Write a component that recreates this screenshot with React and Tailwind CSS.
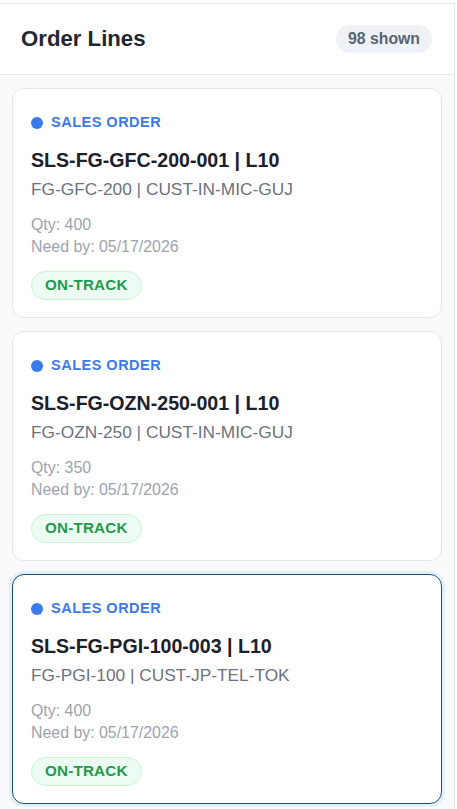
import React from "react";

const lines = [
  { id: "SLS-FG-GFC-200-001 | L10", sub: "FG-GFC-200 | CUST-IN-MIC-GUJ", qty: 400, need: "05/17/2026" },
  { id: "SLS-FG-OZN-250-001 | L10", sub: "FG-OZN-250 | CUST-IN-MIC-GUJ", qty: 350, need: "05/17/2026" },
  { id: "SLS-FG-PGI-100-003 | L10", sub: "FG-PGI-100 | CUST-JP-TEL-TOK", qty: 400, need: "05/17/2026", selected: true },
];

const LineCard = ({ line }) => (
  <div
    className={
      "rounded-[12px] bg-white px-[18px] pt-[24px] pb-[17px] border " +
      (line.selected
        ? "border-[#1d4f73] ring-[3px] ring-[#e3f0f9]"
        : "border-[#e3e7ec]")
    }
  >
    <div className="flex items-center gap-[8px] h-[20px]">
      <span className="w-[12px] h-[12px] rounded-full bg-[#3b7ae8]" />
      <span className="text-[14.5px] font-bold tracking-[0.5px] text-[#3b7ae8]">SALES ORDER</span>
    </div>
    <div className="mt-[13px] text-[19.6px] leading-[28px] font-bold text-[#1a202c]">{line.id}</div>
    <div className="mt-[3px] text-[17.3px] leading-[24px] text-[#6b7280]">{line.sub}</div>
    <div className="mt-[13px] text-[15.9px] leading-[22px] text-[#9ca3af]">
      <div>Qty: {line.qty}</div>
      <div>Need by: {line.need}</div>
    </div>
    <div className="mt-[13px] inline-flex items-center h-[29px] px-[13px] rounded-full bg-[#edfcf2] border border-[#c9f2d7] text-[15.2px] font-bold tracking-[0.2px] text-[#1f9a4b]">
      ON-TRACK
    </div>
  </div>
);

export default function App() {
  return (
    <div className="w-[457px] h-[809px] bg-white overflow-hidden" style={{ fontFamily: '"Liberation Sans", Arial, sans-serif' }}>
      <div className="mt-[3px] w-[455px] h-[806px] border-t border-r border-[#e5e7eb] flex flex-col">
        <div className="h-[71px] shrink-0 flex items-center justify-between pl-[21px] pr-[22px] border-b border-[#e5e7eb] bg-white">
          <h1 className="text-[22.2px] font-bold text-[#1f2733]">Order Lines</h1>
          <span className="h-[28px] px-[12px] flex items-center rounded-full bg-[#eef2f7] text-[15.8px] font-bold text-[#5b6472]">98 shown</span>
        </div>
        <div className="flex-1 bg-[#f8fafc] px-[12px] pt-[13px] flex flex-col gap-[13px]">
          {lines.map((l) => (
            <LineCard key={l.id} line={l} />
          ))}
        </div>
      </div>
    </div>
  );
}
